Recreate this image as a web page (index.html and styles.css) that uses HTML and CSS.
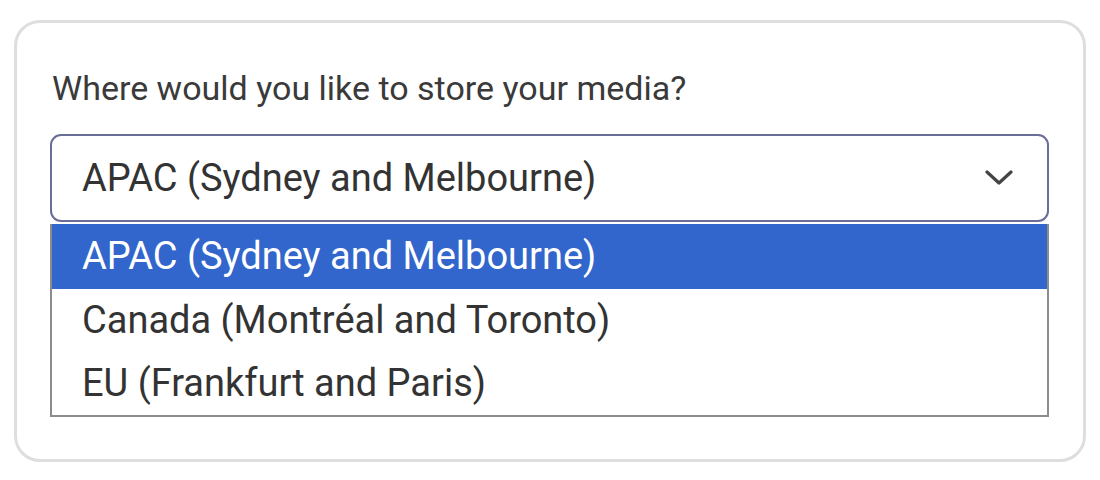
FILE: index.html
```html
<!DOCTYPE html>
<html>
<head>
<meta charset="utf-8">
<link rel="stylesheet" href="styles.css">
</head>
<body>
<div class="card">
  <div class="label">Where would you like to store your media?</div>
  <div class="select">
    <span class="value">APAC (Sydney and Melbourne)</span>
    <svg class="chev" width="28" height="16" viewBox="0 0 28 16"><path d="M2 2 L14 13 L26 2" fill="none" stroke="#444" stroke-width="3.2" stroke-linecap="round" stroke-linejoin="round"/></svg>
  </div>
  <ul class="list">
    <li class="opt selected">APAC (Sydney and Melbourne)</li>
    <li class="opt">Canada (Montréal and Toronto)</li>
    <li class="opt">EU (Frankfurt and Paris)</li>
  </ul>
</div>
</body>
</html>
```

FILE: styles.css
```css
html, body {
  margin: 0;
  padding: 0;
  background: #fff;
  font-family: Roboto, "Liberation Sans", sans-serif;
}
.card {
  box-sizing: border-box;
  margin: 20px 0 0 14px;
  width: 1072px;
  height: 442px;
  border: 3px solid #dedede;
  border-radius: 26px;
  padding: 45px 34px 0 33px;
}
.label {
  font-size: 34px;
  color: #3a3a3a;
  line-height: 40px;
  margin-left: 2px;
}
.select {
  box-sizing: border-box;
  margin-top: 26px;
  height: 88px;
  border: 2px solid #6a6d96;
  border-radius: 11px;
  display: flex;
  align-items: center;
  justify-content: space-between;
  padding: 0 34px 0 30px;
}
.value {
  font-size: 38px;
  color: #333;
}
.chev {
  display: block;
}
.list {
  list-style: none;
  margin: 2px 0 0 0;
  padding: 0;
  border: 2px solid #8c8c8c;
  border-top: none;
}
.opt {
  font-size: 38px;
  color: #333;
  height: 63px;
  line-height: 63px;
  padding-left: 30px;
}
.opt.selected {
  background: #3366cc;
  color: #fff;
  height: 65px;
  line-height: 65px;
}
```
